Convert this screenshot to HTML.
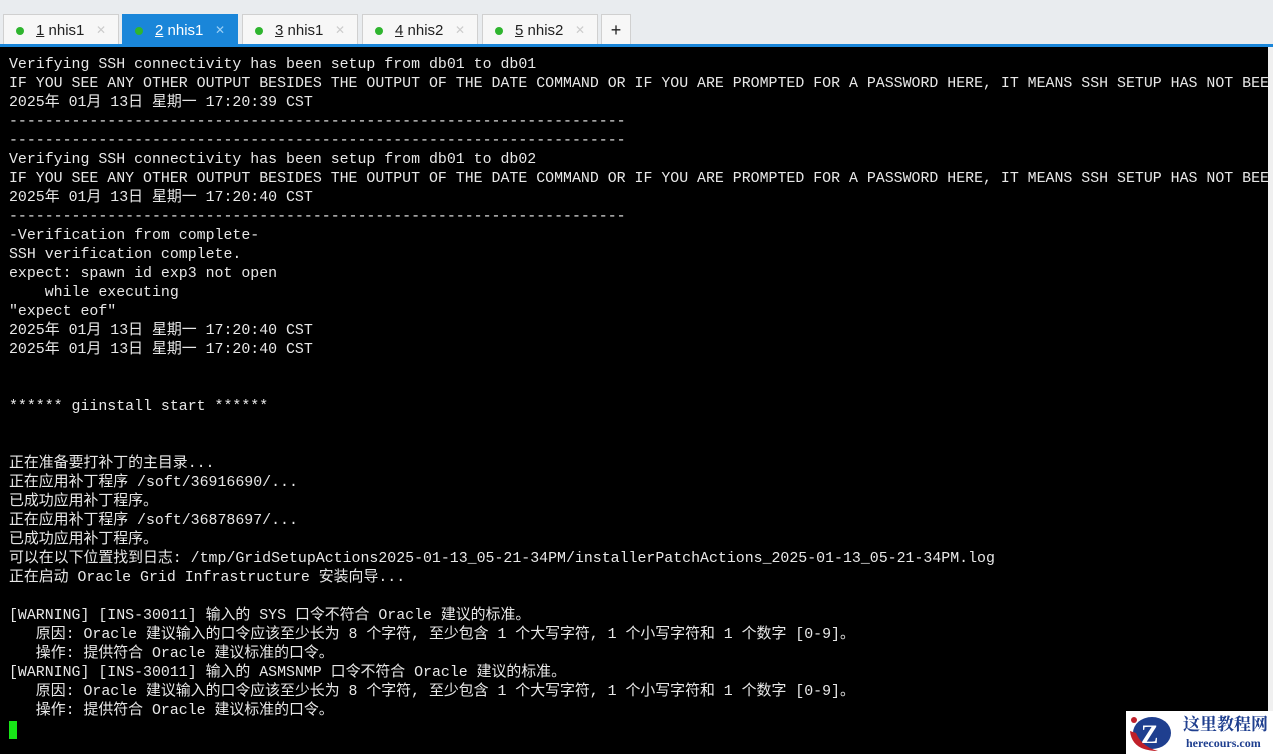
<!DOCTYPE html>
<html><head><meta charset="utf-8"><style>
body{margin:0;width:1273px;height:754px;overflow:hidden;background:#f0f0f0;position:relative;font-family:"Liberation Sans",sans-serif}
.tabs{position:absolute;top:0;left:0;width:1273px;height:47px;background:#e9ecef}
.tab{position:absolute;top:14px;height:31px;width:116px;background:#f7f7f7;border:1px solid #d0d0d0;border-bottom:none;box-sizing:border-box;font-size:15px;color:#222;line-height:31px}
.tab .d{position:absolute;left:12px;top:12px;width:8px;height:8px;border-radius:50%;background:#2fb52f}
.tab .t{position:absolute;left:32px}
.tab .x{position:absolute;right:12px;color:#ccc;font-size:12px}
.tab.a{background:#1a86d9;color:#fff;border-color:#1a86d9}
.tab.a .x{color:#9cd0f5}
.bar{position:absolute;top:44px;left:0;width:1273px;height:3px;background:#1a86d9}
.term{position:absolute;top:47px;left:0;width:1268px;height:707px;background:#000}
pre{margin:0;position:absolute;left:9px;top:56px;color:#e8e8e8;font-family:"Liberation Mono","Noto Sans CJK SC",monospace;font-size:14.9px;line-height:19px;white-space:pre;width:1259px;overflow:hidden}
.cur{position:absolute;left:9px;top:721px;width:8px;height:18px;background:#17e617}
.logo{position:absolute;left:1126px;top:711px;width:147px;height:43px;background:#fff;white-space:nowrap}
</style></head><body>
<div class="tabs">
<div class="tab" style="left:3px"><span class="d"></span><span class="t"><u>1</u> nhis1</span><span class="x">✕</span></div>
<div class="tab a" style="left:122px"><span class="d"></span><span class="t"><u>2</u> nhis1</span><span class="x">✕</span></div>
<div class="tab" style="left:242px"><span class="d"></span><span class="t"><u>3</u> nhis1</span><span class="x">✕</span></div>
<div class="tab" style="left:362px"><span class="d"></span><span class="t"><u>4</u> nhis2</span><span class="x">✕</span></div>
<div class="tab" style="left:482px"><span class="d"></span><span class="t"><u>5</u> nhis2</span><span class="x">✕</span></div>
<div class="tab" style="left:601px;width:30px;text-align:center;font-size:18px">+</div>
</div>
<div class="bar"></div>
<div class="term"></div>
<pre>Verifying SSH connectivity has been setup from db01 to db01
IF YOU SEE ANY OTHER OUTPUT BESIDES THE OUTPUT OF THE DATE COMMAND OR IF YOU ARE PROMPTED FOR A PASSWORD HERE, IT MEANS SSH SETUP HAS NOT BEEN
2025年 01月 13日 星期一 17:20:39 CST
---------------------------------------------------------------------
---------------------------------------------------------------------
Verifying SSH connectivity has been setup from db01 to db02
IF YOU SEE ANY OTHER OUTPUT BESIDES THE OUTPUT OF THE DATE COMMAND OR IF YOU ARE PROMPTED FOR A PASSWORD HERE, IT MEANS SSH SETUP HAS NOT BEEN
2025年 01月 13日 星期一 17:20:40 CST
---------------------------------------------------------------------
-Verification from complete-
SSH verification complete.
expect: spawn id exp3 not open
    while executing
"expect eof"
2025年 01月 13日 星期一 17:20:40 CST
2025年 01月 13日 星期一 17:20:40 CST


****** giinstall start ******


正在准备要打补丁的主目录...
正在应用补丁程序 /soft/36916690/...
已成功应用补丁程序。
正在应用补丁程序 /soft/36878697/...
已成功应用补丁程序。
可以在以下位置找到日志: /tmp/GridSetupActions2025-01-13_05-21-34PM/installerPatchActions_2025-01-13_05-21-34PM.log
正在启动 Oracle Grid Infrastructure 安装向导...

[WARNING] [INS-30011] 输入的 SYS 口令不符合 Oracle 建议的标准。
   原因: Oracle 建议输入的口令应该至少长为 8 个字符, 至少包含 1 个大写字符, 1 个小写字符和 1 个数字 [0-9]。
   操作: 提供符合 Oracle 建议标准的口令。
[WARNING] [INS-30011] 输入的 ASMSNMP 口令不符合 Oracle 建议的标准。
   原因: Oracle 建议输入的口令应该至少长为 8 个字符, 至少包含 1 个大写字符, 1 个小写字符和 1 个数字 [0-9]。
   操作: 提供符合 Oracle 建议标准的口令。</pre>
<div class="cur"></div>
<div class="logo">
<svg width="50" height="43" style="position:absolute;left:0;top:0"><ellipse cx="26" cy="22" rx="19" ry="16" fill="#1f3f8f"/><path d="M4 20 Q6 40 32 40 Q16 36 10 22Z" fill="#c0202a"/><circle cx="8" cy="9" r="3" fill="#c0202a"/><text x="15" y="32" font-size="26" font-weight="bold" fill="#fff" font-family="Liberation Serif">Z</text></svg>
<div style="position:absolute;left:57px;top:2px;font:bold 17px 'Noto Serif CJK SC',serif;color:#1f3f8f;line-height:20px">这里教程网</div>
<div style="position:absolute;left:60px;top:25px;font:bold 12px 'Liberation Serif',serif;color:#1f3f8f">herecours.com</div>
</div>
</body></html>
